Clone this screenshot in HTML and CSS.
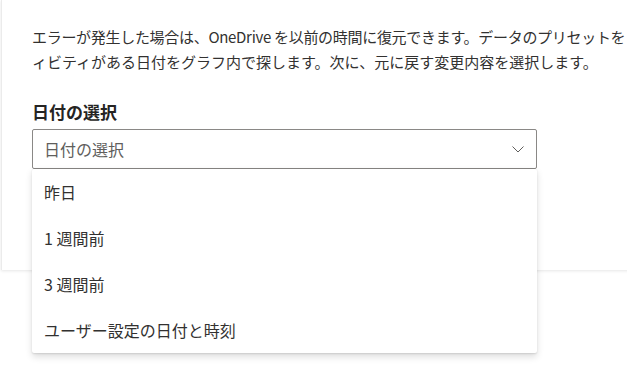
FILE: index.html
```html
<!DOCTYPE html>
<html lang="ja">
<head>
    <meta charset="UTF-8">
    <meta name="viewport" content="width=device-width, initial-scale=1.0">
    <title>OneDrive の復元</title>
    <link rel="stylesheet" href="styles.css">
</head>
<body>
    <div class="restore-card">
        <p class="intro">
            <span class="intro-line">エラーが発生した場合は、OneDrive を以前の時間に復元できます。データのプリセットを</span>
            <span class="intro-line">ィビティがある日付をグラフ内で探します。次に、元に戻す変更内容を選択します。</span>
        </p>

        <h2 class="field-label">日付の選択</h2>

        <div class="date-select">
            <div class="select-box">
                <span class="placeholder">日付の選択</span>
                <svg class="chevron" width="12" height="7" viewBox="0 0 12 7">
                    <polyline points="0.5,0.5 6,6 11.5,0.5" fill="none" stroke="#605e5c" stroke-width="1"></polyline>
                </svg>
            </div>

            <ul class="date-menu">
                <li class="date-option">昨日</li>
                <li class="date-option">1 週間前</li>
                <li class="date-option">3 週間前</li>
                <li class="date-option">ユーザー設定の日付と時刻</li>
            </ul>
        </div>
    </div>
</body>
</html>
```

FILE: styles.css
```css
html, body {
    margin: 0;
    height: 100%;
}

body {
    font-family: "Noto Sans CJK JP", "Noto Sans", sans-serif;
    background: #fff;
    color: #323130;
    overflow: hidden;
}

.restore-card {
    width: 800px;
    margin-left: 1px;
    padding: 24px 0 101px 30px;
    background: #fff;
    border-left: 1px solid #ebebeb;
    box-shadow: 0 1px 3px rgba(0, 0, 0, 0.1);
}

.intro {
    margin: 0;
    font-size: 15px;
    line-height: 25px;
    color: #323130;
}

.intro-line {
    display: block;
    white-space: nowrap;
}

.intro-line:first-child {
    letter-spacing: -0.3px;
}

.field-label {
    margin: 26px 0 0;
    font-size: 17px;
    line-height: 24px;
    font-weight: 700;
    color: #252423;
}

.date-select {
    position: relative;
    width: 505px;
    margin-top: 5px;
}

.select-box {
    display: flex;
    align-items: center;
    justify-content: space-between;
    height: 38px;
    padding: 0 12px 0 11px;
    border: 1px solid #8a8886;
    border-radius: 2px;
    background: #fff;
}

.placeholder {
    font-size: 16px;
    color: #605e5c;
}

.chevron {
    margin-top: 1px;
}

.date-menu {
    position: absolute;
    top: 40px;
    left: 0;
    right: 0;
    margin: 0;
    padding: 0;
    list-style: none;
    background: #fff;
    border-radius: 2px;
    box-shadow: 0 3.2px 7.2px rgba(0, 0, 0, 0.13), 0 0.6px 1.8px rgba(0, 0, 0, 0.11);
}

.date-option {
    height: 46px;
    line-height: 46px;
    padding-left: 12px;
    font-size: 16px;
    color: #323130;
}
```
